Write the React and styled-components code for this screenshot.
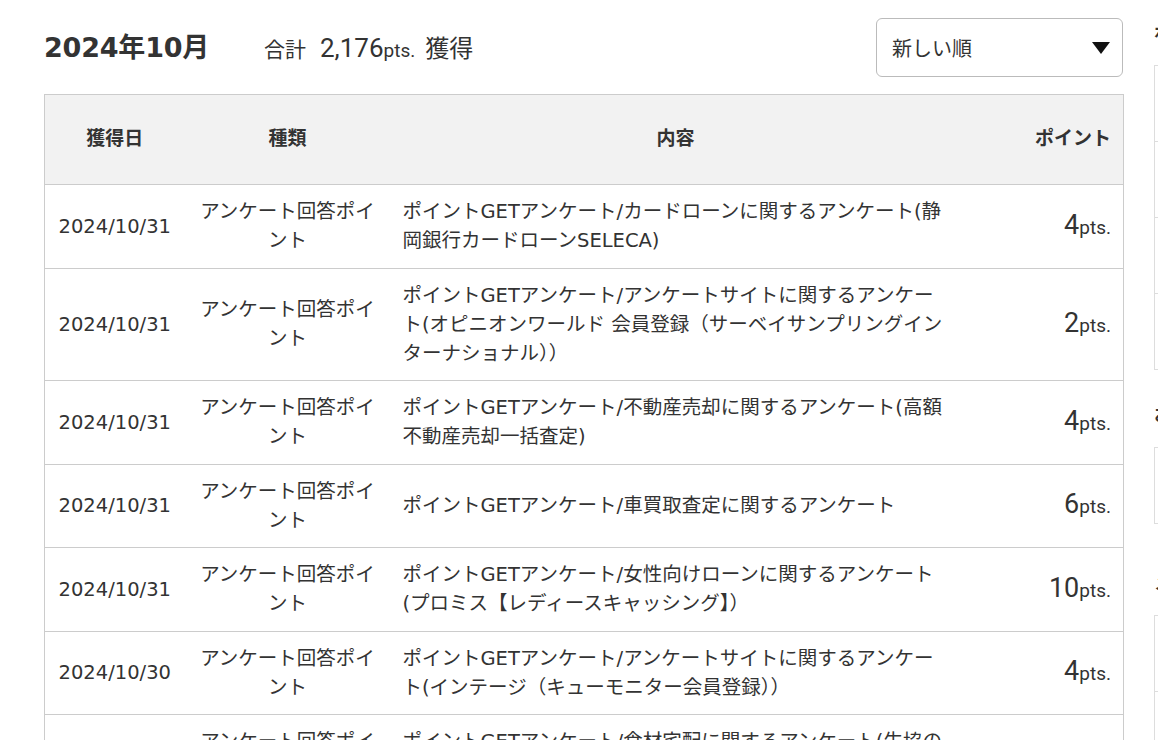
import React from "react";
import styled, { createGlobalStyle } from "styled-components";

const Global = createGlobalStyle`
  html, body {
    margin: 0;
    padding: 0;
    overflow: hidden;
    background: #fff;
  }
  body {
    font-family: "DejaVu Sans", "Noto Sans CJK JP", sans-serif;
    color: #333;
  }
`;

const Page = styled.div`
  display: flex;
  gap: 31px;
  padding: 18px 0 0 44px;
  width: 1500px;
`;

const Main = styled.div`
  width: 1079px;
  flex-shrink: 0;
`;

const TopBar = styled.div`
  display: flex;
  align-items: center;
  height: 59px;
  margin-bottom: 17px;
`;

const MonthTitle = styled.h2`
  margin: 0 0 4px;
  width: 220px;
  font-size: 27px;
  font-weight: bold;
  letter-spacing: -0.2px;
`;

const Total = styled.div`
  flex: 1;
  display: flex;
  align-items: baseline;
  margin-bottom: 2px;
  font-family: "Noto Sans CJK JP", sans-serif;
`;

const TotalLabel = styled.span`
  font-size: ${(p) => p.$size}px;
  margin-left: ${(p) => p.$left || 0}px;
  margin-right: ${(p) => p.$right || 0}px;
`;

const TotalNum = styled.span`
  font-family: Roboto, sans-serif;
  font-size: ${(p) => p.$size}px;
`;

const Select = styled.div`
  box-sizing: border-box;
  width: 247px;
  height: 59px;
  border: 1px solid #bbb;
  border-radius: 6px;
  display: flex;
  align-items: center;
  justify-content: space-between;
  padding: 0 12px 0 15px;
  font-family: "Noto Sans CJK JP", sans-serif;
  font-size: 20px;
`;

const Table = styled.table`
  width: 1079px;
  border-collapse: collapse;
  table-layout: fixed;
`;

const HeadCell = styled.th`
  background: #f2f2f2;
  border-top: 1px solid #ccc;
  border-bottom: 1px solid #ccc;
  border-left: ${(p) => (p.$first ? "1px solid #ccc" : "none")};
  border-right: ${(p) => (p.$last ? "1px solid #ccc" : "none")};
  height: 90px;
  box-sizing: border-box;
  padding: 0 12px 6px;
  font-family: "Noto Sans CJK JP", sans-serif;
  font-size: 19px;
  font-weight: bold;
  text-align: ${(p) => p.$align || "center"};
  vertical-align: middle;
`;

const Cell = styled.td`
  border-bottom: 1px solid #ccc;
  border-left: ${(p) => (p.$first ? "1px solid #ccc" : "none")};
  border-right: ${(p) => (p.$last ? "1px solid #ccc" : "none")};
  padding: 12.25px 12px;
  font-size: 19.5px;
  line-height: 29px;
  text-align: ${(p) => p.$align || "left"};
  vertical-align: middle;
  white-space: nowrap;
`;

const Line = styled.span`
  display: block;
`;

const PtNum = styled.span`
  font-family: Roboto, sans-serif;
  font-size: 27px;
`;

const PtUnit = styled.span`
  font-family: Roboto, sans-serif;
  font-size: 19px;
`;

const Side = styled.aside`
  width: 250px;
  flex-shrink: 0;
`;

const SideTitle = styled.h3`
  margin: ${(p) => p.$top}px 0 21px;
  font-family: "Noto Sans CJK JP", sans-serif;
  font-size: 18px;
  line-height: 26px;
  font-weight: bold;
`;

const SideBox = styled.ul`
  list-style: none;
  margin: 0;
  padding: 0;
  border: 1px solid #ddd;
`;

const SideItem = styled.li`
  height: 75px;
  border-top: 1px solid #ddd;
  &:first-child {
    border-top: none;
  }
`;

const rows = [
  {
    date: "2024/10/31",
    content: ["ポイントGETアンケート/カードローンに関するアンケート(静", "岡銀行カードローンSELECA)"],
    pts: 4,
  },
  {
    date: "2024/10/31",
    content: [
      "ポイントGETアンケート/アンケートサイトに関するアンケー",
      "ト(オピニオンワールド 会員登録（サーベイサンプリングイン",
      "ターナショナル））",
    ],
    pts: 2,
  },
  {
    date: "2024/10/31",
    content: ["ポイントGETアンケート/不動産売却に関するアンケート(高額", "不動産売却一括査定)"],
    pts: 4,
  },
  {
    date: "2024/10/31",
    content: ["ポイントGETアンケート/車買取査定に関するアンケート"],
    pts: 6,
  },
  {
    date: "2024/10/31",
    content: ["ポイントGETアンケート/女性向けローンに関するアンケート", "(プロミス【レディースキャッシング】）"],
    pts: 10,
  },
  {
    date: "2024/10/30",
    content: ["ポイントGETアンケート/アンケートサイトに関するアンケー", "ト(インテージ（キューモニター会員登録））"],
    pts: 4,
  },
  {
    date: "2024/10/30",
    content: ["ポイントGETアンケート/食材宅配に関するアンケート(生協の", "宅配パルシステム)"],
    pts: 4,
  },
];

const Caret = () => (
  <svg width="18" height="12" viewBox="0 0 18 12">
    <path d="M0 0 H18 L9 12 Z" fill="#111" />
  </svg>
);

const App = () => {
  return (
    <>
      <Global />
      <Page>
        <Main>
          <TopBar>
            <MonthTitle>2024年10月</MonthTitle>
            <Total>
              <TotalLabel $size={21} $right={14}>合計</TotalLabel>
              <TotalNum $size={26}>2,176</TotalNum>
              <TotalNum $size={19}>pts.</TotalNum>
              <TotalLabel $size={24} $left={10}>獲得</TotalLabel>
            </Total>
            <Select>
              <span>新しい順</span>
              <Caret />
            </Select>
          </TopBar>
          <Table>
            <colgroup>
              <col style={{ width: 140 }} />
              <col style={{ width: 206 }} />
              <col style={{ width: 570 }} />
              <col style={{ width: 163 }} />
            </colgroup>
            <thead>
              <tr>
                <HeadCell $first>獲得日</HeadCell>
                <HeadCell>種類</HeadCell>
                <HeadCell>内容</HeadCell>
                <HeadCell $last $align="right">ポイント</HeadCell>
              </tr>
            </thead>
            <tbody>
              {rows.map((r, i) => (
                <tr key={i}>
                  <Cell $first $align="center">{r.date}</Cell>
                  <Cell $align="center">
                    <Line>アンケート回答ポイ</Line>
                    <Line>ント</Line>
                  </Cell>
                  <Cell>
                    {r.content.map((c, j) => (
                      <Line key={j}>{c}</Line>
                    ))}
                  </Cell>
                  <Cell $last $align="right">
                    <PtNum>{r.pts}</PtNum>
                    <PtUnit>pts.</PtUnit>
                  </Cell>
                </tr>
              ))}
            </tbody>
          </Table>
        </Main>
        <Side>
          <SideTitle $top={0}>ポイント交換</SideTitle>
          <SideBox>
            <SideItem />
            <SideItem />
            <SideItem />
            <SideItem />
          </SideBox>
          <SideTitle $top={30}>お知らせ</SideTitle>
          <SideBox>
            <SideItem />
          </SideBox>
          <SideTitle $top={44}>メニュー</SideTitle>
          <SideBox>
            <SideItem />
            <SideItem />
          </SideBox>
        </Side>
      </Page>
    </>
  );
};

export default App;
